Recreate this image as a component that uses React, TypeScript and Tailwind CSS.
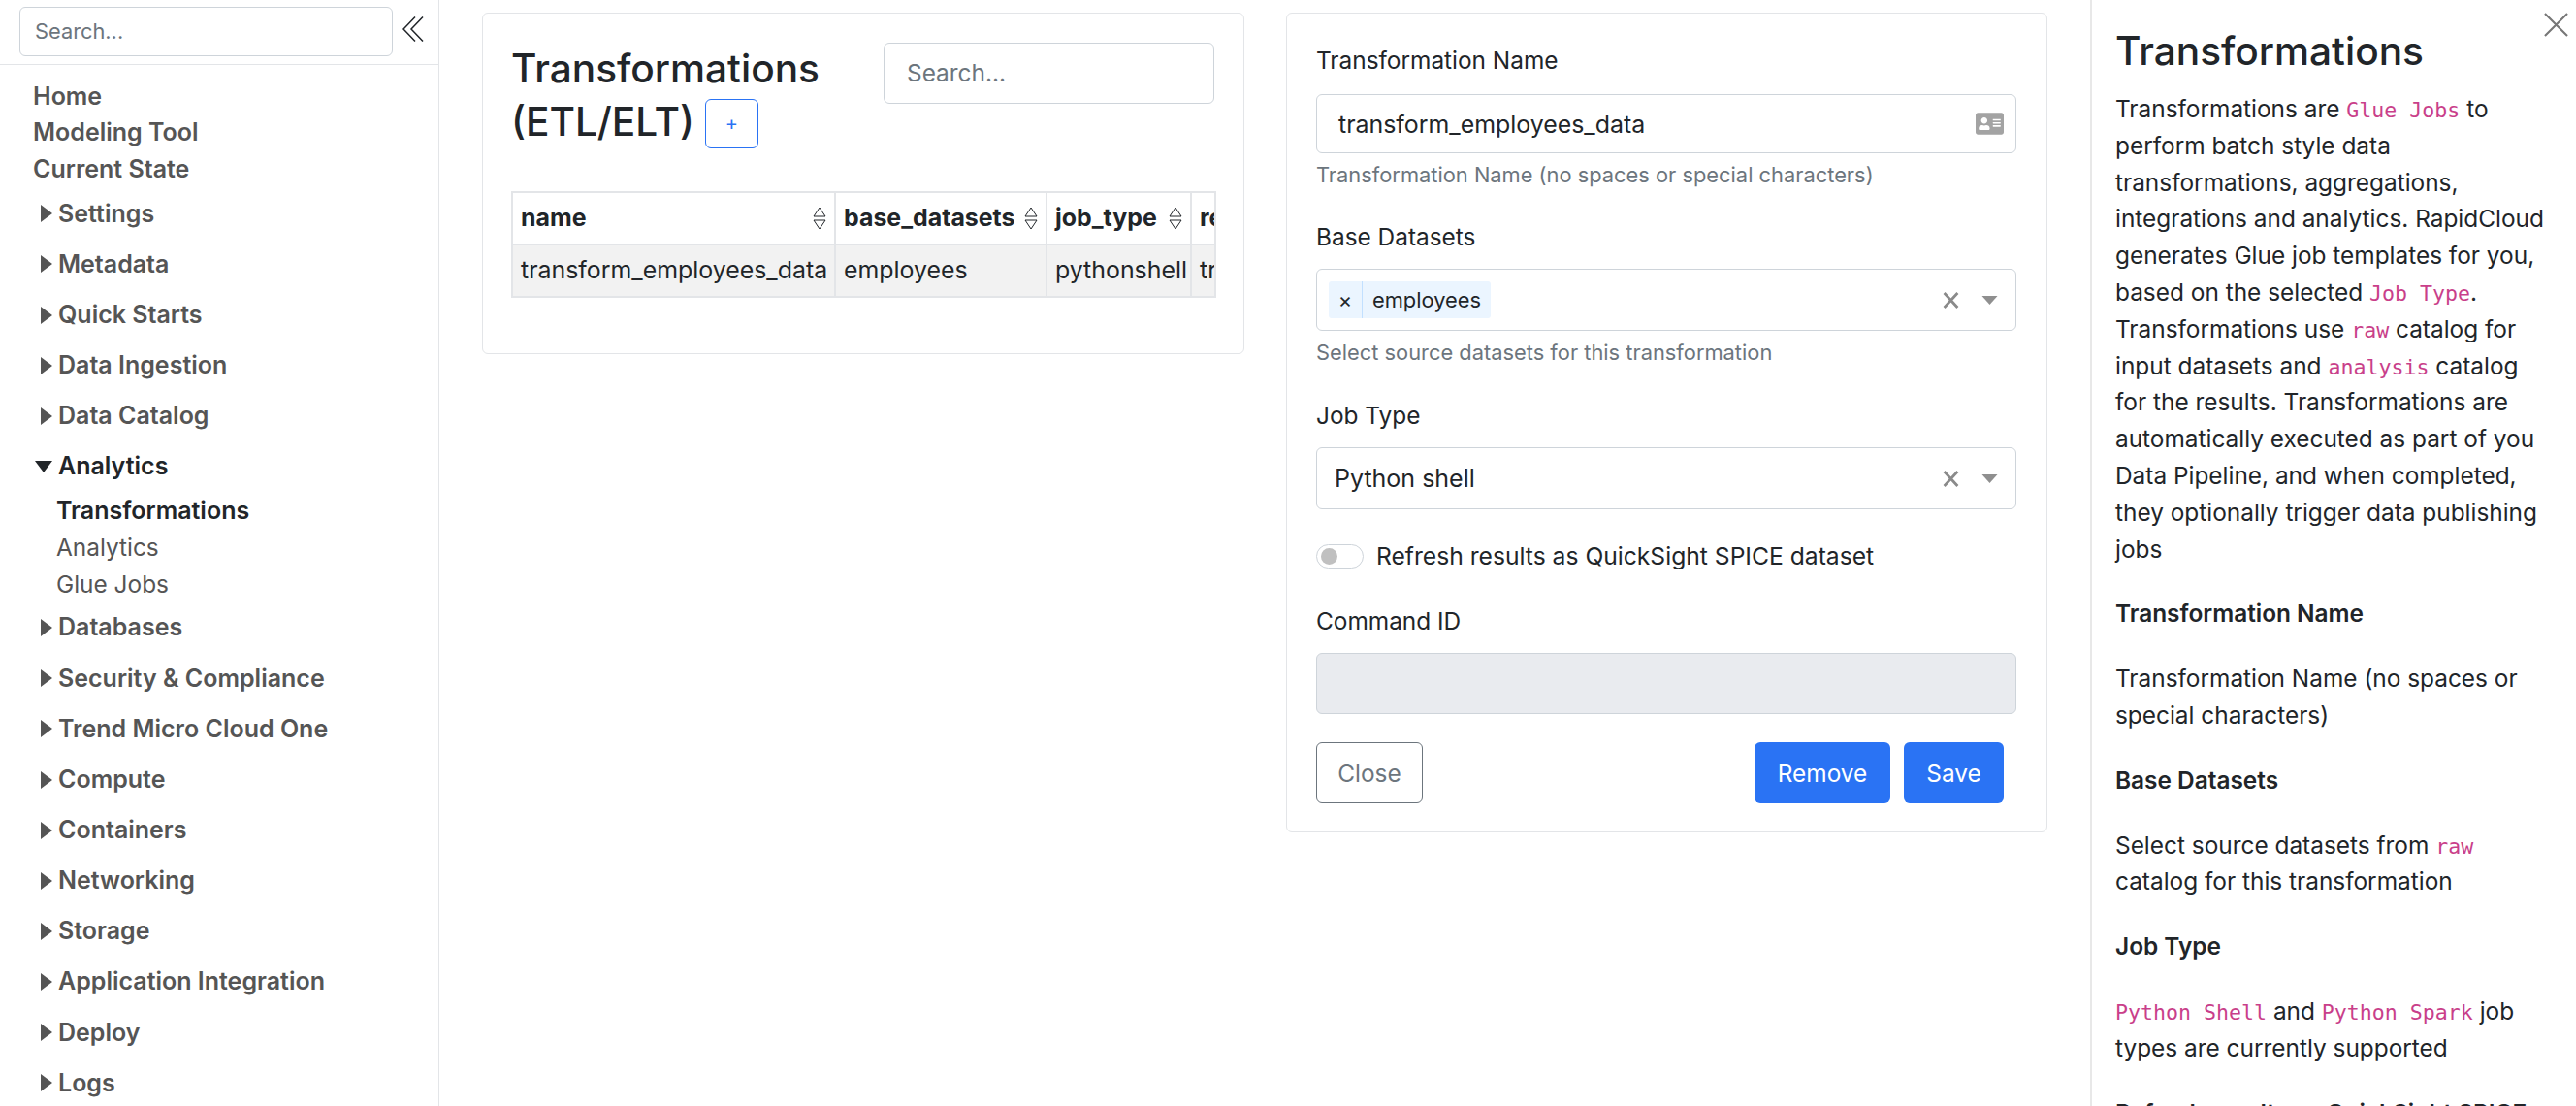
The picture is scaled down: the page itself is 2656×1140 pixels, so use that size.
import { FaAddressCard } from "react-icons/fa";

const groupsTop = ["Settings", "Metadata", "Quick Starts", "Data Ingestion", "Data Catalog"];
const groupsBottom = [
  "Databases",
  "Security & Compliance",
  "Trend Micro Cloud One",
  "Compute",
  "Containers",
  "Networking",
  "Storage",
  "Application Integration",
  "Deploy",
  "Logs",
];

function NavGroup({ label, open }: { label: string; open?: boolean }) {
  return (
    <div className={`flex h-[52.15px] items-center ${open ? "text-[#212529]" : "text-[#555]"}`}>
      <span className="flex w-[60px] justify-end pr-[6px]">
        {open ? (
          <svg viewBox="0 0 18 12" className="h-[12px] w-[18px] fill-current">
            <path d="M0 0 H18 L9 12 Z" />
          </svg>
        ) : (
          <svg viewBox="0 0 12 18" className="h-[18px] w-[12px] fill-current">
            <path d="M0 0 L12 9 L0 18 Z" />
          </svg>
        )}
      </span>
      <span>{label}</span>
    </div>
  );
}

function SortIcon() {
  return (
    <svg viewBox="0 0 14 24" className="h-[24px] w-[14px] shrink-0 fill-none stroke-[#212529]">
      <path d="M7 1 L13 10 H1 Z M1 14 H13 L7 23 Z" strokeWidth="1" />
    </svg>
  );
}

function Code({ children }: { children: string }) {
  return (
    <code className="font-['DejaVu_Sans_Mono',monospace] text-[21.6px] leading-none text-[#c93f8a]">{children}</code>
  );
}

function Clear() {
  return (
    <div className="flex items-center gap-[23px] pr-[18px]">
      <svg viewBox="0 0 16 16" className="h-[17px] w-[17px] stroke-[#8a8a8a]">
        <path d="M1.5 1 L14.5 15 M14.5 1 L1.5 15" strokeWidth="2.6" />
      </svg>
      <svg viewBox="0 0 16 9" className="h-[9px] w-[17px] fill-[#8f8f8f]">
        <path d="M0 0 H16 L8 9 Z" />
      </svg>
    </div>
  );
}

export default function App() {
  return (
    <div className="flex h-[1140px] overflow-hidden bg-white font-['Inter',sans-serif] text-[24.4px] text-[#212529]">
      {/* Sidebar */}
      <aside className="w-[453px] shrink-0 border-r border-[#e3e5e8]">
        <div className="flex h-[67px] items-start border-b border-[#e3e5e8] pt-[7px] pl-[20px]">
          <div className="flex h-[51px] w-[385px] items-center rounded-[6px] border border-[#ced4da] pl-[15px] text-[21.8px] text-[#6c757d]">
            Search...
          </div>
          <svg viewBox="0 0 22 26" className="mt-[10px] ml-[10px] h-[26px] w-[22px] fill-none stroke-[#212529]">
            <path d="M13 0.5 L1 13 L13 25.5 M21 0.5 L9 13 L21 25.5" strokeWidth="1.5" />
          </svg>
        </div>
        <nav className="pt-[14px] text-[25px] font-semibold text-[#555]">
          <div className="pl-[34px] leading-[37.4px]">
            <div>Home</div>
            <div>Modeling Tool</div>
            <div>Current State</div>
          </div>
          <div className="mt-[1px]">
            {groupsTop.map((g) => (
              <NavGroup key={g} label={g} />
            ))}
            <NavGroup label="Analytics" open />
            <div className="pl-[58px] leading-[38px] font-normal">
              <div className="font-semibold text-[#212529]">Transformations</div>
              <div className="text-[24.4px]">Analytics</div>
              <div className="text-[24.4px]">Glue Jobs</div>
            </div>
            {groupsBottom.map((g) => (
              <NavGroup key={g} label={g} />
            ))}
          </div>
        </nav>
      </aside>

      {/* Table card */}
      <section className="mt-[13px] ml-[44px] h-[352px] w-[786px] shrink-0 rounded-[6px] border border-[#e3e5e8] pt-[29px] pl-[29px]">
        <div className="flex h-[154px] items-start">
          <h2 className="w-[384px] shrink-0 text-[40.6px] leading-[55px] font-medium">
            Transformations (ETL/ELT)
            <span className="ml-[11px] inline-flex h-[51px] w-[55px] items-center justify-center rounded-[6px] border border-[#2a73f4] align-[6px] text-[20px] font-normal text-[#2a73f4]">
              +
            </span>
          </h2>
          <div className="mt-[1px] flex h-[63px] w-[341px] items-center rounded-[6px] border border-[#ced4da] pl-[23px] text-[#6c757d]">
            Search...
          </div>
        </div>
        <table className="w-[725px] table-fixed border-collapse text-[24.9px]">
          <colgroup>
            <col className="w-[333px]" />
            <col className="w-[218px]" />
            <col className="w-[149px]" />
            <col className="w-[25px]" />
          </colgroup>
          <thead>
            <tr className="h-[54px]">
              {["name", "base_datasets", "job_type", "result"].map((h) => (
                <th key={h} className="overflow-hidden border-2 border-[#e3e5e8] px-[8px] text-left font-bold">
                  <div className="flex items-center justify-between">
                    {h}
                    <SortIcon />
                  </div>
                </th>
              ))}
            </tr>
          </thead>
          <tbody>
            <tr className="h-[54px] bg-[#f2f2f2]">
              {["transform_employees_data", "employees", "pythonshell", "transform_employees_data"].map((c, i) => (
                <td key={i} className="overflow-hidden border-2 border-[#e3e5e8] px-[8px] whitespace-nowrap">
                  {c}
                </td>
              ))}
            </tr>
          </tbody>
        </table>
      </section>

      {/* Form card */}
      <section className="mt-[13px] ml-[43px] h-[845px] w-[785px] shrink-0 rounded-[6px] border border-[#e3e5e8] pt-[29px] pr-[31px] pl-[30px] leading-[38px]">
        <div>Transformation Name</div>
        <div className="mt-[16px] flex h-[61px] items-center justify-between rounded-[6px] border border-[#ced4da] pr-[12px] pl-[22px] text-[24.9px]">
          transform_employees_data
          <FaAddressCard className="h-[29px] w-[29px] text-[#a3a3a3]" />
        </div>
        <div className="mt-[6px] text-[21.85px] leading-[32px] text-[#6c757d]">
          Transformation Name (no spaces or special characters)
        </div>
        <div className="mt-[29px]">Base Datasets</div>
        <div className="mt-[14px] flex h-[64px] items-center justify-between rounded-[6px] border border-[#ced4da] pl-[12px]">
          <div className="flex h-[38px] items-center rounded-[3px] bg-[#ebf5ff] text-[21.85px]">
            <span className="flex h-full w-[35px] items-center justify-center border-r border-[#c2e0ff]">×</span>
            <span className="px-[10px]">employees</span>
          </div>
          <Clear />
        </div>
        <div className="mt-[6px] text-[21.85px] leading-[32px] text-[#6c757d]">
          Select source datasets for this transformation
        </div>
        <div className="mt-[30px]">Job Type</div>
        <div className="mt-[14px] flex h-[64px] items-center justify-between rounded-[6px] border border-[#ced4da] pl-[18px] text-[25px]">
          Python shell
          <Clear />
        </div>
        <div className="mt-[29px] flex items-center gap-[13px] text-[24.65px]">
          <div className="flex h-[25px] w-[49px] items-center rounded-full border border-[#ced4da] pl-[4px]">
            <div className="h-[17px] w-[17px] rounded-full bg-[#c0c0c0]" />
          </div>
          Refresh results as QuickSight SPICE dataset
        </div>
        <div className="mt-[29px]">Command ID</div>
        <div className="mt-[14px] h-[63px] rounded-[6px] border border-[#ced4da] bg-[#e9ebef]" />
        <div className="mt-[29px] flex justify-between pr-[13px]">
          <button className="h-[63px] w-[110px] rounded-[6px] border border-[#6c757d] text-[#6c757d]">Close</button>
          <div className="flex gap-[14px]">
            <button className="h-[63px] w-[140px] rounded-[6px] bg-[#2a73f4] text-white">Remove</button>
            <button className="h-[63px] w-[103px] rounded-[6px] bg-[#2a73f4] text-white">Save</button>
          </div>
        </div>
      </section>

      {/* Help panel */}
      <aside className="relative ml-[44px] w-[501px] shrink-0 border-l-2 border-[#e8e8e8] pt-[25px] pl-[24px] leading-[37.8px]">
        <svg viewBox="0 0 26 26" className="absolute top-[13px] left-[466px] h-[25px] w-[25px] stroke-[#777]">
          <path d="M1 1 L25 25 M25 1 L1 25" strokeWidth="2.2" />
        </svg>
        <h2 className="text-[40.6px] leading-[55px] font-medium">Transformations</h2>
        <p className="mt-[14px] w-[452px]">
          Transformations are <Code>Glue Jobs</Code> to perform batch style data transformations, aggregations,
          integrations and analytics. RapidCloud generates Glue job templates for you, based on the selected{" "}
          <Code>Job Type</Code>. Transformations use <Code>raw</Code> catalog for input datasets and{" "}
          <Code>analysis</Code> catalog for the results. Transformations are automatically executed as part of you Data
          Pipeline, and when completed, they optionally trigger data publishing jobs
        </p>
        <p className="mt-[29px] font-semibold">Transformation Name</p>
        <p className="mt-[29px] w-[452px]">Transformation Name (no spaces or special characters)</p>
        <p className="mt-[29px] font-semibold">Base Datasets</p>
        <p className="mt-[29px] w-[452px]">
          Select source datasets from <Code>raw</Code> catalog for this transformation
        </p>
        <p className="mt-[29px] font-semibold">Job Type</p>
        <p className="mt-[29px] w-[452px]">
          <Code>Python Shell</Code> and <Code>Python Spark</Code> job types are currently supported
        </p>
        <p className="mt-[29px] font-semibold">Refresh results as QuickSight SPICE dataset</p>
      </aside>
    </div>
  );
}
